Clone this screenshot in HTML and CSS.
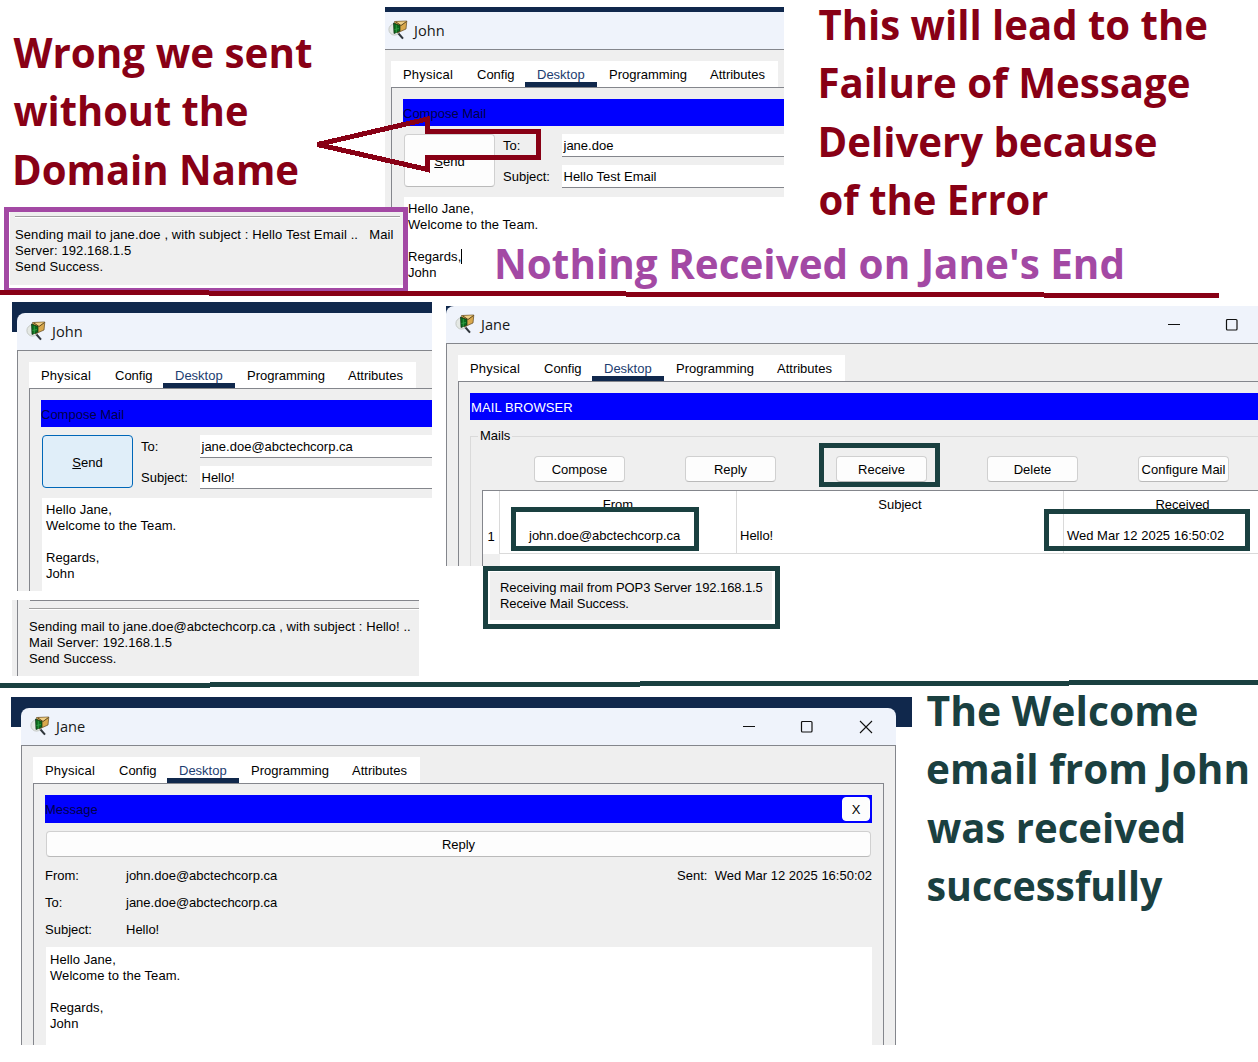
FILE: index.html
```
<!DOCTYPE html>
<html lang="en">
<head>
<meta charset="utf-8">
<title>Mail delivery test</title>
<link rel="stylesheet" href="styles.css">
</head>
<body>
<svg class="defs" width="0" height="0" aria-hidden="true">
  <symbol id="tracer" viewBox="0 0 20 20">
    <circle cx="6.500" cy="9.500" r="5.600" fill="#e4e8e4" stroke="#c3c7c3"/>
    <path d="M10.500 13.500L15 18.700" stroke="#30363c" stroke-width="2"/>
    <path d="M6.500 1.500L18.800 1L18 9L9 13Z" fill="#d9a84c" stroke="#5d4620" stroke-width=".7"/>
    <path d="M8 2L13 5.500L18.500 1.500" fill="#f0cf86" stroke="#4d3a15" stroke-width=".9"/>
    <path d="M5.500 3L12 5.500V11L6 13.500Z" fill="#0b6a1c" stroke="#0b2e10" stroke-width=".7"/>
    <path d="M8.300 5V13M6.500 9.500L11 8.500" stroke="#35a548" stroke-width=".8"/>
  </symbol>
</svg>
<main class="canvas">

  <section class="shot shot-failed">
    <div class="window">
      <header class="titlebar"><svg class="logo"><use href="#tracer"/></svg><span>John</span></header>
      <div class="client">
        <nav class="tabs"><span>Physical</span><span>Config</span><span class="active">Desktop</span><span>Programming</span><span>Attributes</span></nav>
        <div class="panel">
          <h2 class="bar">Compose Mail</h2>
          <div class="compose">
            <button class="send"><u>S</u>end</button>
            <div class="fields">
              <span>To:</span><div class="input">jane.doe</div>
              <span>Subject:</span><div class="input">Hello Test Email</div>
            </div>
          </div>
          <div class="message">Hello Jane,<br>Welcome to the Team.<br><br>Regards,<i class="caret"></i><br>John</div>
        </div>
      </div>
    </div>
  </section>

  <section class="shot shot-sent">
    <div class="window">
      <header class="titlebar"><svg class="logo"><use href="#tracer"/></svg><span>John</span></header>
      <div class="client">
        <nav class="tabs"><span>Physical</span><span>Config</span><span class="active">Desktop</span><span>Programming</span><span>Attributes</span></nav>
        <div class="panel">
          <h2 class="bar">Compose Mail</h2>
          <div class="compose">
            <button class="send focused"><u>S</u>end</button>
            <div class="fields">
              <span>To:</span><div class="input">jane.doe@abctechcorp.ca</div>
              <span>Subject:</span><div class="input">Hello!</div>
            </div>
          </div>
          <div class="message">Hello Jane,<br>Welcome to the Team.<br><br>Regards,<br>John</div>
        </div>
      </div>
    </div>
  </section>

  <section class="shot shot-inbox">
    <div class="window">
      <header class="titlebar"><svg class="logo"><use href="#tracer"/></svg><span>Jane</span>
        <svg class="controls" width="130" height="14" viewBox="0 0 130 14"><path d="M0 6.500H12"/><rect x="58.500" y="1.500" width="10.500" height="10.500" rx="1"/></svg>
      </header>
      <div class="client">
        <nav class="tabs"><span>Physical</span><span>Config</span><span class="active">Desktop</span><span>Programming</span><span>Attributes</span></nav>
        <div class="panel">
          <h2 class="bar light">MAIL BROWSER</h2>
          <fieldset class="mails">
            <legend>Mails</legend>
            <div class="actions"><button>Compose</button><button>Reply</button><button>Receive</button><button>Delete</button><button>Configure Mail</button></div>
            <div class="grid">
              <span class="num"></span><span class="head">From</span><span class="head">Subject</span><span class="head">Received</span>
              <span class="num">1</span><span class="cell from">john.doe@abctechcorp.ca</span><span class="cell">Hello!</span><span class="cell">Wed Mar 12 2025 16:50:02</span>
              <span class="rest"></span>
            </div>
          </fieldset>
        </div>
      </div>
    </div>
  </section>

  <section class="shot log-sent">
    <div class="log-body"><hr>Sending mail to jane.doe@abctechcorp.ca , with subject : Hello! ..<br>Mail Server: 192.168.1.5<br>Send Success.</div>
  </section>

  <section class="shot shot-read">
    <div class="window">
      <header class="titlebar"><svg class="logo"><use href="#tracer"/></svg><span>Jane</span>
        <svg class="controls" width="130" height="14" viewBox="0 0 130 14"><path d="M0 6.500H12"/><rect x="58.500" y="1.500" width="10.500" height="10.500" rx="1"/><path class="thin" d="M117 1L129 13M129 1L117 13"/></svg>
      </header>
      <div class="client">
        <nav class="tabs"><span>Physical</span><span>Config</span><span class="active">Desktop</span><span>Programming</span><span>Attributes</span></nav>
        <div class="panel">
          <h2 class="bar tall">Message<button class="close">X</button></h2>
          <button class="reply">Reply</button>
          <div class="meta">
            <span>From:</span><span>john.doe@abctechcorp.ca</span><span class="date">Sent:&nbsp; Wed Mar 12 2025 16:50:02</span>
            <span>To:</span><span>jane.doe@abctechcorp.ca</span><span></span>
            <span>Subject:</span><span>Hello!</span><span></span>
          </div>
          <div class="message">Hello Jane,<br>Welcome to the Team.<br><br>Regards,<br>John</div>
        </div>
      </div>
    </div>
  </section>

  <section class="note note-failed"><div><hr>Sending mail to jane.doe , with subject : Hello Test Email ..&nbsp;&nbsp; Mail<br>Server: 192.168.1.5<br>Send Success.</div></section>
  <section class="note note-received"><div>Receiving mail from POP3 Server 192.168.1.5<br>Receive Mail Success.</div></section>

  <svg class="marks" width="1258" height="1062" viewBox="0 0 1258 1062">
    <g class="red">
      <path d="M0 290H209V295H0ZM209 291H626V296H209ZM626 292H1044V297H626ZM1044 293H1219V298H1044Z"/>
      <text x="13.500" y="68" textLength="299" lengthAdjust="spacingAndGlyphs">Wrong we sent</text>
      <text x="13.500" y="126" textLength="235" lengthAdjust="spacingAndGlyphs">without the</text>
      <text x="12" y="185" textLength="287" lengthAdjust="spacingAndGlyphs">Domain Name</text>
      <text x="818.500" y="40" textLength="389.500" lengthAdjust="spacingAndGlyphs">This will lead to the</text>
      <text x="817.500" y="98" textLength="373" lengthAdjust="spacingAndGlyphs">Failure of Message</text>
      <text x="817.500" y="156.500" textLength="340" lengthAdjust="spacingAndGlyphs">Delivery because</text>
      <text x="818.500" y="215" textLength="230" lengthAdjust="spacingAndGlyphs">of the Error</text>
      <path class="arrow" d="M317.500 144.500L427.500 119V131.500H538V157.500H427.500V169.500Z"/>
    </g>
    <g class="purple"><text x="494" y="279" textLength="631" lengthAdjust="spacingAndGlyphs">Nothing Received on Jane's End</text></g>
    <g class="green">
      <path d="M0 683H210V688H0ZM210 682H640V687H210ZM640 681H1069V686H640ZM1069 680H1258V685H1069Z"/>
      <rect x="821.500" y="445.500" width="116" height="39"/>
      <rect x="513.500" y="509.500" width="183" height="39"/>
      <rect x="1046.500" y="511.500" width="201" height="37"/>
      <text x="926.500" y="726" textLength="272" lengthAdjust="spacingAndGlyphs">The Welcome</text>
      <text x="926" y="784" textLength="324" lengthAdjust="spacingAndGlyphs">email from John</text>
      <text x="927" y="843" textLength="259" lengthAdjust="spacingAndGlyphs">was received</text>
      <text x="926.500" y="901" textLength="236" lengthAdjust="spacingAndGlyphs">successfully</text>
    </g>
  </svg>
</main>
</body>
</html>
```
FILE: styles.css
```
* { box-sizing: border-box; }
body { margin: 0; background: #fff; color: #000; font: 13px/16px "Liberation Sans", Arial, sans-serif; }
.canvas { position: relative; width: 1258px; height: 1062px; overflow: hidden; }
.defs { position: absolute; }
button { margin: 0; padding: 1px 0 0; font: inherit; color: inherit; background: #fdfdfd; border: 1px solid #d0d0d0; border-bottom-color: #bababa; border-radius: 4px; }
hr { margin: 0; border: 0; height: 2px; background: #fff; border-top: 1px solid #a0a0a0; }

/* Cropped captures pinned on the canvas */
.shot { position: absolute; overflow: hidden; }
.shot-failed { left: 385px; top: 7px; width: 399px; height: 279px; padding-top: 5px; background: #10284c; }
.shot-failed .window { width: 480px; margin-left: -6px; border-radius: 0; }
.shot-sent { left: 12px; top: 302px; width: 420px; height: 289px; padding: 11px 0 0 5px; background: linear-gradient(#10284c 30px, #fff 30px); }
.shot-sent .window { width: 480px; }
.shot-inbox { left: 446px; top: 306px; width: 812px; height: 260px; background: #10284c; }
.shot-inbox .window { width: 875px; }
.shot-read { left: 11px; top: 697px; width: 901px; height: 348px; padding: 11px 16px 0 10px; background: linear-gradient(#10284c 30px, #fff 30px); }
.shot-read .window { border-radius: 8px 8px 0 0; }
.log-sent { left: 12px; top: 600px; width: 407px; height: 76px; padding-left: 5px; background: #efefef; }
.log-body { height: 76px; padding: 8px 0 0 11px; border-left: 1px solid #84868c; background: linear-gradient(#84868c, #84868c) 12px 0 / 100% 1px no-repeat; white-space: nowrap; letter-spacing: .055px; }
.log-body hr { margin-bottom: 9px; }

/* Application window */
.window { height: 400px; display: flex; flex-direction: column; border-radius: 8px 0 0 0; background: #eff3fb; overflow: hidden; }
.titlebar { flex: none; height: 37px; padding-left: 9px; display: flex; align-items: center; gap: 6px; font: 14.6px/20px "Open Sans", "Noto Sans", sans-serif; color: #181818; }
.titlebar span { margin-top: -2px; }
.logo { width: 20px; height: 20px; margin-top: -2px; }
.controls { margin-left: auto; margin-right: 23px; fill: none; stroke: #111; stroke-width: 1.2; }
.controls .thin { stroke-width: 1.1; }
.client { flex: 1; display: flex; flex-direction: column; align-items: flex-start; padding: 11px 11px 0; border: 1px solid #84868c; border-bottom: 0; background: #efefef; }
.tabs { display: flex; height: 26px; width: 387px; background: #fff; line-height: 28px; }
.tabs span { padding-left: 12px; width: 74px; white-space: nowrap; }
.tabs span:first-child { letter-spacing: .2px; }
.tabs span:nth-child(2) { width: 60px; }
.tabs .active { width: 72px; border-bottom: 5px solid #10284c; color: #1c3d70; }
.tabs span:nth-child(4) { width: 101px; }
.tabs span:nth-child(5) { width: 80px; }
.panel { flex: 1; align-self: stretch; padding: 11px 11px 0; border: 1px solid #84868c; border-bottom: 0; }
.bar { margin: 0; height: 27px; background: #00f; color: #00004a; font: inherit; line-height: 30px; }
.bar.light { color: #fff; padding-left: 1px; letter-spacing: .1px; }
.bar.tall { height: 28px; display: flex; justify-content: space-between; padding: 0 2px 0 0; }
.close { width: 28px; height: 24px; margin-top: 2px; line-height: 20px; color: #000; border-color: #fff; }

/* Compose form */
.compose { display: flex; gap: 8px; padding: 8px 0 9px 1px; }
.send { width: 91px; height: 53px; flex: none; padding-top: 2px; }
.send.focused { background: #e0eef9; border-color: #0067b8; }
.fields { flex: 1; display: grid; grid-template-columns: 59px 1fr; grid-template-rows: 23px 23px; row-gap: 8px; line-height: 24px; }
.input { background: #fff; border-bottom: 1px solid #84868c; padding-left: 1.5px; }
.message { height: 200px; margin-left: 1px; padding: 4px 4px; background: #fff; letter-spacing: .07px; }
.caret { display: inline-block; width: 1px; height: 15px; background: #000; vertical-align: -3px; margin-right: -1px; }

/* Mail browser */
.mails { margin: 8px 0 0; padding: 0 0 0 11px; border: 1px solid #dadada; min-width: 0; }
.mails legend { margin-left: -4px; padding: 0 2px; }
.actions { display: flex; gap: 60px; padding: 12px 0 8px 52px; }
.actions button { flex: none; width: 91px; height: 26px; white-space: nowrap; }
.grid { display: grid; grid-template-columns: 17px 237px 327px 238px; grid-template-rows: 27px 36px 100px; border: solid #84868c; border-width: 1px 0 0 1px; background: #fff; }
.grid span { border-right: 1px solid #dadada; }
.num { text-align: center; line-height: 38px; }
.head { text-align: center; line-height: 27px; }
.cell { line-height: 36px; padding-left: 3px; border-bottom: 1px solid #dadada; white-space: nowrap; }
.cell.from { padding-left: 29px; }
.grid .rest { background: #efefef; border: 0; }

/* Message reader */
.reply { display: block; width: 825px; height: 26px; margin: 8px 0 5px 1px; }
.meta { display: grid; grid-template-columns: 81px 1fr 1fr; grid-auto-rows: 27px; line-height: 27px; margin-bottom: 4px; }
.date { text-align: right; }
.shot-read .message { padding-top: 5px; }

/* Framed log excerpts */
.note { position: absolute; border: 5px solid; background: #fff; white-space: nowrap; }
.note div { background: #efefef; }
.note-failed { left: 4px; top: 207px; width: 404px; height: 86px; border-color: #a349a4; }
.note-failed div { height: 73px; margin-left: 1px; padding: 4px 3px 0 5px; letter-spacing: .108px; }
.note-failed hr { margin-bottom: 9px; }
.note-received { left: 483px; top: 566px; width: 297px; height: 63px; border-color: #1a4040; padding: 1px 3px 4px 2px; }
.note-received div { height: 48px; padding: 8px 10px 0; letter-spacing: -.09px; }

/* Headline captions and outlines over the captures */
.marks { position: absolute; left: 0; top: 0; }
.marks path, .marks rect { shape-rendering: crispEdges; }
.marks text { font: 700 42px "Open Sans", "Noto Sans", sans-serif; font-stretch: 88%; }
.red { fill: #880015; }
.purple { fill: #a349a4; }
.green { fill: #1a4040; }
.red .arrow { fill: none; stroke: #880015; stroke-width: 5; }
.green rect { fill: none; stroke: #1a4040; stroke-width: 5; }
```
